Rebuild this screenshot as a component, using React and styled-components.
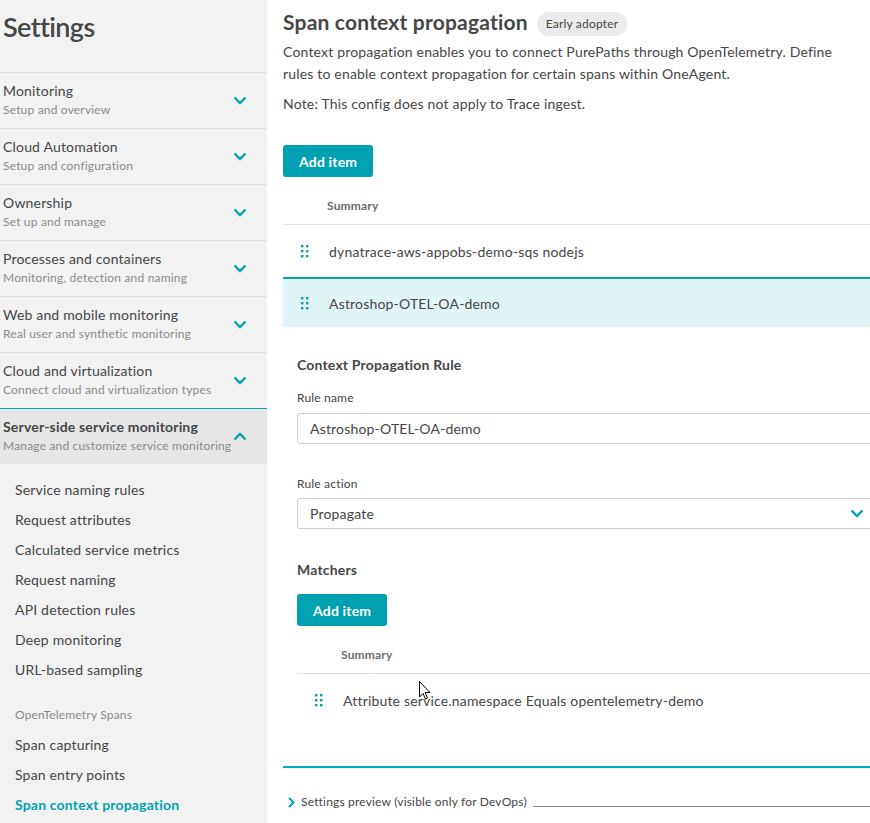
import React from "react";
import styled, { createGlobalStyle } from "styled-components";

const Global = createGlobalStyle`
  html, body { margin: 0; padding: 0; background: #fff; overflow: hidden; }
  body { font-family: Lato, "Noto Sans", sans-serif; color: #454646; letter-spacing: 0.18px; }
  * { box-sizing: border-box; }
`;

const TEAL = "#00a1b2";

const Page = styled.div`
  display: grid;
  grid-template-columns: 267px 1fr;
  width: 870px;
  height: 823px;
  overflow: hidden;
  position: relative;
`;

const Sidebar = styled.aside`
  background: #f2f2f2;
  height: 823px;
  display: flex;
  flex-direction: column;
  overflow: hidden;
`;

const SideTitle = styled.h1`
  margin: 0;
  height: 72px;
  padding: 8px 0 0 3px;
  font-size: 27px;
  line-height: 38px;
  font-weight: 600;
  color: #454646;
  letter-spacing: -0.6px;
`;

const Group = styled.div`
  height: 56px;
  display: flex;
  align-items: flex-start;
  padding: 8px 0 0 3px;
  border-top: 1px solid ${(p) => (p.$active ? TEAL : "#e0e0e0")};
  background: ${(p) => (p.$active ? "#e6e6e6" : "transparent")};
`;

const GroupText = styled.div`
  flex: 1;
  min-width: 0;
  display: flex;
  flex-direction: column;
  white-space: nowrap;
`;

const GroupTitle = styled.span`
  font-size: 14px;
  line-height: 20px;
  font-weight: ${(p) => (p.$active ? 700 : 400)};
  color: #454646;
`;

const GroupSub = styled.span`
  font-size: 12px;
  line-height: 18px;
  color: #8a8a8a;
`;

const Chevron = styled.span`
  width: 54px;
  flex-shrink: 0;
  display: flex;
  justify-content: center;
  padding-top: 15px;
  color: ${TEAL};
  position: relative;
`;

const SubList = styled.nav`
  display: flex;
  flex-direction: column;
  padding: 11px 0 0 15px;
`;

const SubLink = styled.span`
  height: 30px;
  line-height: 30px;
  font-size: 14px;
  color: ${(p) => (p.$active ? TEAL : "#454646")};
  font-weight: ${(p) => (p.$active ? 700 : 400)};
`;

const SubLabel = styled.span`
  height: 30px;
  line-height: 30px;
  margin-top: 15px;
  font-size: 12px;
  color: #8a8a8a;
`;

const Main = styled.main`
  padding-left: 16px;
  overflow: hidden;
`;

const Content = styled.div`
  width: 600px;
  display: flex;
  flex-direction: column;
`;

const HeadingRow = styled.div`
  display: flex;
  align-items: center;
  gap: 9px;
  padding-top: 8px;
`;

const Heading = styled.h2`
  margin: 0;
  font-size: 21px;
  line-height: 28px;
  font-weight: 700;
  letter-spacing: 0.2px;
  color: #454646;
`;

const Badge = styled.span`
  background: #ebebeb;
  border-radius: 12px;
  height: 24px;
  line-height: 24px;
  padding: 0 9px;
  font-size: 12px;
  color: #454646;
  margin-top: 3px;
`;

const Para = styled.p`
  margin: ${(p) => p.$mt || 0}px 0 0;
  font-size: 14px;
  line-height: 22px;
  color: #454646;
  width: 580px;
`;

const Button = styled.button`
  align-self: flex-start;
  margin-top: ${(p) => p.$mt}px;
  height: 32px;
  padding: 0 16px;
  background: ${TEAL};
  border: none;
  border-radius: 3px;
  color: #fff;
  font-family: inherit;
  letter-spacing: 0.18px;
  font-size: 14px;
  font-weight: 700;
`;

const TableHead = styled.div`
  margin-top: 20px;
  height: 28px;
  border-bottom: 1px solid #e3e3e3;
  padding-left: 44px;
  font-size: 12px;
  line-height: 18px;
  font-weight: 700;
  color: #6b6b6b;
`;

const Row = styled.div`
  display: flex;
  align-items: center;
  gap: 20px;
  padding-left: 18px;
  height: ${(p) => (p.$selected ? 50 : 52)}px;
  border-top: ${(p) => (p.$selected ? `2px solid ${TEAL}` : "none")};
  background: ${(p) => (p.$selected ? "#e1f5f8" : "transparent")};
  font-size: 14px;
  color: #454646;
`;

const Details = styled.div`
  padding-left: 14px;
  display: flex;
  flex-direction: column;
`;

const SectionTitle = styled.div`
  margin-top: ${(p) => p.$mt}px;
  font-size: 14px;
  line-height: 20px;
  font-weight: 700;
  color: #454646;
`;

const FieldLabel = styled.div`
  margin-top: ${(p) => p.$mt}px;
  font-size: 12px;
  line-height: 18px;
  color: #454646;
`;

const Field = styled.div`
  margin-top: ${(p) => p.$mt}px;
  height: 31px;
  border: 1px solid #cfcfcf;
  border-radius: 3px;
  display: flex;
  align-items: center;
  justify-content: space-between;
  padding: 0 18px 0 12px;
  font-size: 14px;
  color: #454646;
  background: #fff;
`;

const Divider = styled.div`
  margin-top: 40px;
  height: 2px;
  background: #00b0c4;
`;

const Preview = styled.div`
  margin-top: 25px;
  display: flex;
  align-items: center;
  gap: 6px;
  padding-left: 5px;
  font-size: 12px;
  line-height: 18px;
  color: #454646;
`;

const PreviewLine = styled.span`
  flex: 1;
  height: 1px;
  background: #8a8a8a;
  margin-top: 8px;
`;

const Cursor = styled.svg`
  position: absolute;
  left: 419px;
  top: 681px;
`;

const ChevronDown = ({ up }) => (
  <svg width="14" height="9" viewBox="0 0 14 9">
    <path
      d={up ? "M1.5 7.5 L7 2 L12.5 7.5" : "M1.5 1.5 L7 7 L12.5 1.5"}
      fill="none"
      stroke={TEAL}
      strokeWidth="2.4"
    />
  </svg>
);

const Grip = () => (
  <svg width="8" height="13" viewBox="0 0 8 13">
    {[0, 5, 10].map((y) =>
      [0, 5].map((x) => (
        <rect key={`${x}-${y}`} x={x} y={y} width="2.4" height="2.4" fill={TEAL} />
      ))
    )}
  </svg>
);

const groups = [
  ["Monitoring", "Setup and overview"],
  ["Cloud Automation", "Setup and configuration"],
  ["Ownership", "Set up and manage"],
  ["Processes and containers", "Monitoring, detection and naming"],
  ["Web and mobile monitoring", "Real user and synthetic monitoring"],
  ["Cloud and virtualization", "Connect cloud and virtualization types"],
];

const links = [
  "Service naming rules",
  "Request attributes",
  "Calculated service metrics",
  "Request naming",
  "API detection rules",
  "Deep monitoring",
  "URL-based sampling",
];

export default function App() {
  return (
    <>
      <Global />
      <Page>
        <Sidebar>
          <SideTitle>Settings</SideTitle>
          <div>
            {groups.map(([t, s]) => (
              <Group key={t}>
                <GroupText>
                  <GroupTitle>{t}</GroupTitle>
                  <GroupSub>{s}</GroupSub>
                </GroupText>
                <Chevron>
                  <ChevronDown />
                </Chevron>
              </Group>
            ))}
            <Group $active>
              <GroupText>
                <GroupTitle $active>Server-side service monitoring</GroupTitle>
                <GroupSub>Manage and customize service monitoring</GroupSub>
              </GroupText>
              <Chevron>
                <ChevronDown up />
              </Chevron>
            </Group>
          </div>
          <SubList>
            {links.map((l) => (
              <SubLink key={l}>{l}</SubLink>
            ))}
            <SubLabel>OpenTelemetry Spans</SubLabel>
            <SubLink>Span capturing</SubLink>
            <SubLink>Span entry points</SubLink>
            <SubLink $active>Span context propagation</SubLink>
          </SubList>
        </Sidebar>
        <Main>
          <Content>
            <HeadingRow>
              <Heading>Span context propagation</Heading>
              <Badge>Early adopter</Badge>
            </HeadingRow>
            <Para $mt={5}>
              Context propagation enables you to connect PurePaths through OpenTelemetry. Define
              <br />
              rules to enable context propagation for certain spans within OneAgent.
            </Para>
            <Para $mt={8}>Note: This config does not apply to Trace ingest.</Para>
            <Button $mt={30}>Add item</Button>
            <TableHead>Summary</TableHead>
            <Row>
              <Grip />
              <span>dynatrace-aws-appobs-demo-sqs nodejs</span>
            </Row>
            <Row $selected>
              <Grip />
              <span>Astroshop-OTEL-OA-demo</span>
            </Row>
            <Details>
              <SectionTitle $mt={28}>Context Propagation Rule</SectionTitle>
              <FieldLabel $mt={14}>Rule name</FieldLabel>
              <Field $mt={6}>Astroshop-OTEL-OA-demo</Field>
              <FieldLabel $mt={31}>Rule action</FieldLabel>
              <Field $mt={5}>
                <span>Propagate</span>
                <ChevronDown />
              </Field>
              <SectionTitle $mt={31}>Matchers</SectionTitle>
              <Button $mt={14}>Add item</Button>
              <TableHead>Summary</TableHead>
              <Row>
                <Grip />
                <span>Attribute service.namespace Equals opentelemetry-demo</span>
              </Row>
            </Details>
            <Divider />
            <Preview>
              <svg width="7" height="11" viewBox="0 0 7 11">
                <path d="M1 1 L5.5 5.5 L1 10" fill="none" stroke={TEAL} strokeWidth="2" />
              </svg>
              <span>Settings preview (visible only for DevOps)</span>
              <PreviewLine />
            </Preview>
          </Content>
        </Main>
        <Cursor width="12" height="19" viewBox="0 0 12 19">
          <path d="M0.5 0.5 L0.5 16 L4 12.5 L6.5 18 L8.5 17 L6 11.5 L11 11.5 Z" fill="#fff" stroke="#000" strokeWidth="1" />
        </Cursor>
      </Page>
    </>
  );
}
